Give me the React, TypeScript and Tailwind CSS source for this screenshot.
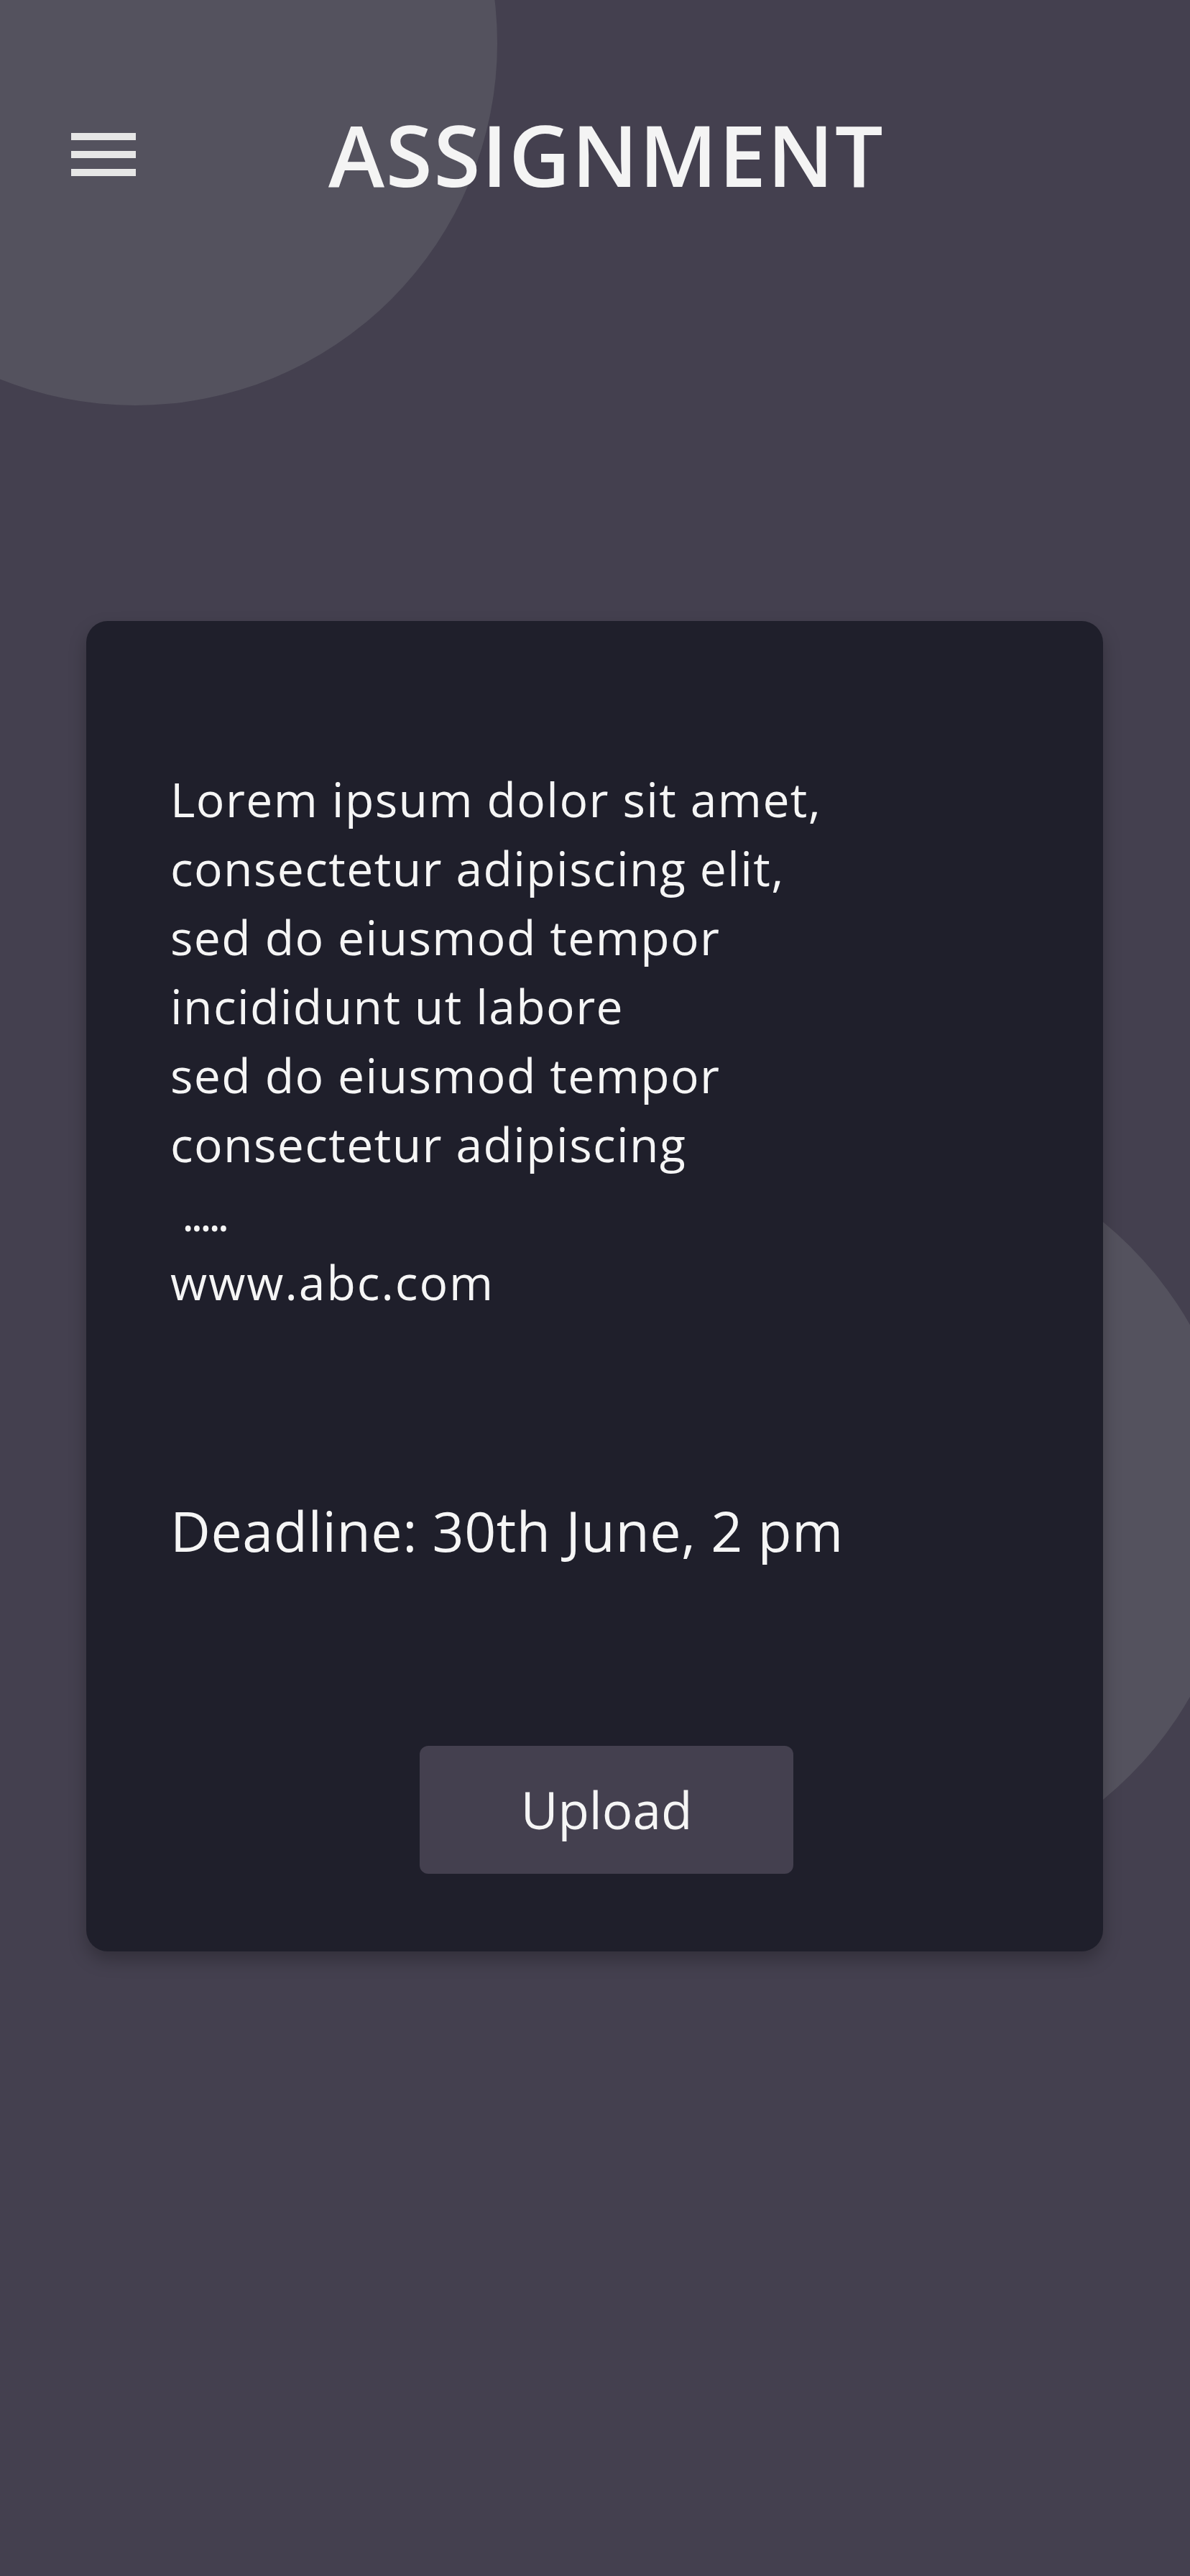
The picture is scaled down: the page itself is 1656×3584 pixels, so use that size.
export default function App() {
  const lines = [
    'Lorem ipsum dolor sit amet,',
    'consectetur adipiscing elit,',
    'sed do eiusmod tempor',
    'incididunt ut labore',
    'sed do eiusmod tempor',
    'consectetur adipiscing',
  ];

  return (
    <div
      className="relative min-h-[3584px] w-full overflow-hidden bg-[#44404f]"
      style={{ fontFamily: '"Open Sans", "Noto Sans", sans-serif' }}
    >
      {/* Decorative circles */}
      <div className="absolute left-[-316px] top-[-444px] h-[1008px] w-[1008px] rounded-full bg-[#54525e]" />
      <div className="absolute left-[685px] top-[1582px] h-[1040px] w-[1040px] rounded-full bg-[#54525e]" />

      <div className="relative z-10">
        {/* Header */}
        <header className="mt-[150px] flex h-[130px] items-center pl-[99px]">
          <button className="flex w-[90px] flex-col gap-[15px]">
            <span className="block h-[10px] w-[90px] bg-[#e6e6e6]" />
            <span className="block h-[10px] w-[90px] bg-[#e6e6e6]" />
            <span className="block h-[10px] w-[90px] bg-[#e6e6e6]" />
          </button>
          <h1 className="ml-[268px] text-[118px] font-semibold leading-none tracking-[1.8px] text-[#f4f4f4]">
            ASSIGNMENT
          </h1>
        </header>

        {/* Card */}
        <main className="ml-[120px] mt-[584px] w-[1415px] rounded-[30px] bg-[#1f1f2b] pb-[108px] pl-[117px] pt-[199px] shadow-[0_12px_24px_rgba(0,0,0,0.25)]">
          <div className="text-[66px] leading-[96px] tracking-[1.4px] text-[#f5f5f5]">
            {lines.map((l, i) => (
              <div key={i}>{l}</div>
            ))}
            <div className="pl-[16px] tracking-[-5px]">.....</div>
            <div className="tracking-[2px]">www.abc.com</div>
          </div>

          <p className="mt-[253px] text-[77px] font-medium leading-[92px] tracking-[0.6px] text-[#f5f5f5]">
            Deadline: 30th June, 2 pm
          </p>

          <div className="mt-[253px] flex">
            <button className="ml-[347px] flex h-[178px] w-[520px] items-center justify-center rounded-[12px] bg-[#44404f] text-[71px] text-[#f5f5f5]">
              Upload
            </button>
          </div>
        </main>
      </div>
    </div>
  );
}
